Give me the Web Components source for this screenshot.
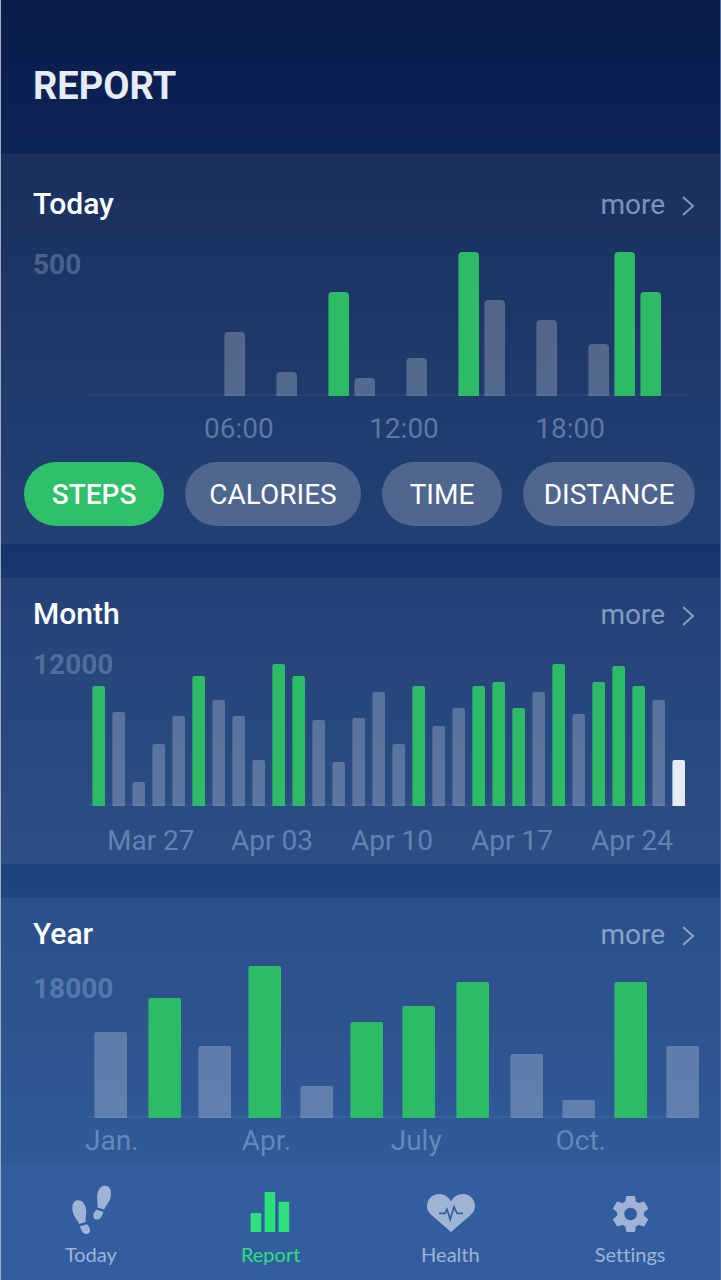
<!DOCTYPE html>
<html lang="en">
<head>
<meta charset="utf-8">
<meta name="viewport" content="width=device-width, initial-scale=1">
<title>Report</title>
<style>
    body{
        margin: 0;
        font-family: Roboto, "Liberation Sans", sans-serif;
        color: #fff;
    }
</style>
</head>
<body>
<report-app>
    <report-panel heading="Today" style="--pad-top: 32px; --pad-bottom: 18px; --head-gap: 26px">
        <bar-chart kind="day" peak="500"></bar-chart>
        <metric-tabs></metric-tabs>
    </report-panel>
    <report-panel heading="Month" style="--pad-bottom: 6px; --head-gap: 16px">
        <bar-chart kind="month" peak="12000"></bar-chart>
    </report-panel>
    <report-panel heading="Year" style="--pad-bottom: 8px; --head-gap: 14px">
        <bar-chart kind="year" peak="18000"></bar-chart>
    </report-panel>
    <tab-bar slot="footer">
        <tab-item label="Today" icon="steps"></tab-item>
        <tab-item label="Report" icon="report" active></tab-item>
        <tab-item label="Health" icon="heart"></tab-item>
        <tab-item label="Settings" icon="gear"></tab-item>
    </tab-bar>
</report-app>

<script>
class ReportApp extends HTMLElement{
    constructor(){
        super();
        this.shadow = this.attachShadow({mode: 'open'});
    }

    connectedCallback(){
        this.shadow.innerHTML =
        `
        <style>
            :host{
                display: flex;
                flex-direction: column;
                min-height: 100vh;
                box-sizing: border-box;
                border-left: 1px solid #a3adbd;
                border-right: 1px solid #52709f;
                background: linear-gradient(#0a1c4c, #0c2454 12%, #17366e 44%, #1e4580 69%, #26549a);
            }
            header{
                padding: 62px 32px 44px;
            }
            h1{
                margin: 0;
                font-size: 38px;
                line-height: 48px;
                font-weight: 700;
                color: #e6ebf5;
            }
            main{
                display: flex;
                flex-direction: column;
                gap: 34px;
                flex: 1;
            }
        </style>
        <header><h1>REPORT</h1></header>
        <main><slot></slot></main>
        <slot name="footer"></slot>`;
    }
}
customElements.define('report-app', ReportApp);

class ReportPanel extends HTMLElement{
    constructor(){
        super();
        this.shadow = this.attachShadow({mode: 'open'});
    }

    connectedCallback(){
        this.shadow.innerHTML =
        `
        <style>
            :host{
                display: block;
                padding: var(--pad-top, 18px) 0 var(--pad-bottom);
                background: rgba(255, 255, 255, .06);
            }
            .head{
                display: flex;
                justify-content: space-between;
                align-items: baseline;
                padding: 0 25px 0 32px;
                margin-bottom: var(--head-gap);
            }
            h2{
                margin: 0;
                font-size: 30px;
                line-height: 36px;
                font-weight: 500;
            }
            a{
                display: flex;
                align-items: center;
                gap: 16px;
                font-size: 28px;
                line-height: 32px;
                color: rgba(215, 234, 255, .54);
                text-decoration: none;
            }
            svg{
                width: 14px;
                height: 20px;
                margin-top: 2px;
            }
        </style>
        <div class="head">
            <h2>${this.getAttribute('heading')}</h2>
            <a href="#">more
                <svg viewBox="0 0 14 20" aria-hidden="true">
                    <path d="M2 1L12 10L2 19" fill="none" stroke="currentColor" stroke-width="2"/>
                </svg>
            </a>
        </div>
        <slot></slot>`;
    }
}
customElements.define('report-panel', ReportPanel);

// bars are [x, height, tone]: g = goal reached, w = running day, none = below goal
const CHARTS = {
    day: {
        height: 148,
        barWidth: 20,
        radius: 4,
        axis: [87, 687],
        bars: [
            [224, 64], [276, 24], [328, 104, 'g'], [354, 18], [406, 38], [458, 144, 'g'],
            [484, 96], [536, 76], [588, 52], [614, 144, 'g'], [640, 104, 'g']
        ],
        labels: ['06:00', '12:00', '18:00'],
        columns: '166fr 167fr 68fr',
        inset: '16px 115px 16px 203px'
    },
    month: {
        height: 158,
        barWidth: 12,
        radius: 2,
        axis: [87, 687],
        bars: [
            [92, 120, 'g'], [112, 94], [132, 24], [152, 62], [172, 90], [192, 130, 'g'],
            [212, 106], [232, 90], [252, 46], [272, 142, 'g'], [292, 130, 'g'], [312, 86],
            [332, 44], [352, 88], [372, 114], [392, 62], [412, 120, 'g'], [432, 80],
            [452, 98], [472, 120, 'g'], [492, 124, 'g'], [512, 98, 'g'], [532, 114],
            [552, 142, 'g'], [572, 92], [592, 124, 'g'], [612, 140, 'g'], [632, 120, 'g'],
            [652, 106], [672, 46, 'w']
        ],
        labels: ['Mar 27', 'Apr 03', 'Apr 10', 'Apr 17', 'Apr 24'],
        columns: '124fr 120fr 120fr 120fr 82fr',
        inset: '18px 47px 0 106px'
    },
    year: {
        height: 152,
        barWidth: 32,
        radius: 2,
        axis: [87, 687],
        bars: [
            [94, 86], [148, 120, 'g'], [198, 72], [248, 152, 'g'], [300, 32], [350, 96, 'g'],
            [402, 112, 'g'], [456, 136, 'g'], [510, 64], [562, 18], [614, 136, 'g'], [666, 72]
        ],
        labels: ['Jan.', 'Apr.', 'July', 'Oct.'],
        columns: '157fr 149fr 165fr 50fr',
        inset: '6px 114px 0 84px'
    }
};

class BarChart extends HTMLElement{
    constructor(){
        super();
        this.shadow = this.attachShadow({mode: 'open'});
    }

    connectedCallback(){
        const chart = CHARTS[this.getAttribute('kind')];
        const h = chart.height;
        const r = chart.radius;
        const w = chart.barWidth;

        const bars = chart.bars.map(([x, size, tone = '']) =>
            `<path class="${tone}" d="M${x - 0.6} ${h}v${r - size}q0 ${-r} ${r} ${-r}h${w + 0.6 - 2 * r}q${r} 0 ${r} ${r}v${size - r}z"/>`
        ).join('');

        this.shadow.innerHTML =
        `
        <style>
            :host{
                display: block;
                font-size: 28px;
                line-height: 34px;
            }
            .plot{
                display: grid;
            }
            .plot > *{
                grid-area: 1 / 1;
            }
            svg{
                display: block;
                width: 100%;
            }
            path{
                fill: rgba(255, 255, 255, .24);
            }
            path.g{
                fill: #2dbb68;
            }
            path.w{
                fill: #e6ebf4;
            }
            .axis{
                fill: rgba(255, 255, 255, .04);
            }
            .peak{
                padding-left: 32px;
                font-weight: 700;
                color: rgba(205, 228, 255, .27);
                align-self: start;
            }
            :host([kind="year"]) .peak{
                padding-top: 6px;
            }
            .labels{
                display: grid;
                grid-template-columns: ${chart.columns};
                padding: ${chart.inset};
                color: rgba(168, 198, 235, .45);
                white-space: nowrap;
            }
        </style>
        <div class="plot">
            <span class="peak">${this.getAttribute('peak')}</span>
            <svg viewBox="0 0 719 ${h}" role="img" aria-label="Steps chart">
                <rect class="axis" x="${chart.axis[0]}" y="${h - 2}" width="${chart.axis[1] - chart.axis[0]}" height="2"/>
                ${bars}
            </svg>
        </div>
        <div class="labels">${chart.labels.map(label => `<span>${label}</span>`).join('')}</div>`;
    }
}
customElements.define('bar-chart', BarChart);

class MetricTabs extends HTMLElement{
    constructor(){
        super();
        this.shadow = this.attachShadow({mode: 'open'});
    }

    connectedCallback(){
        this.shadow.innerHTML =
        `
        <style>
            :host{
                display: grid;
                grid-template-columns: 140fr 176fr 120fr 172fr;
                gap: 21px;
                padding: 0 25px 0 23px;
            }
            button{
                height: 64px;
                padding: 2px 0 0;
                border: 0;
                border-radius: 32px;
                background: #4f668f;
                font: inherit;
                font-size: 28px;
                line-height: 32px;
                color: #fff;
                cursor: pointer;
            }
            button.active{
                background: #2ec06a;
                font-weight: 500;
            }
        </style>
        <button class="active" type="button">STEPS</button>
        <button type="button">CALORIES</button>
        <button type="button">TIME</button>
        <button type="button">DISTANCE</button>`;

        const buttons = this.shadow.querySelectorAll('button');
        buttons.forEach(button => {
            button.addEventListener('click', () => {
                buttons.forEach(b => b.classList.toggle('active', b === button));
            });
        });
    }
}
customElements.define('metric-tabs', MetricTabs);

class TabBar extends HTMLElement{
    constructor(){
        super();
        this.shadow = this.attachShadow({mode: 'open'});
    }

    connectedCallback(){
        this.shadow.innerHTML =
        `
        <style>
            :host{
                display: block;
                background: #325ea0;
            }
            nav{
                display: grid;
                grid-template-columns: repeat(4, 1fr);
                padding: 20px 0 14px;
            }
        </style>
        <nav><slot></slot></nav>`;
    }
}
customElements.define('tab-bar', TabBar);

const SHOE = `
    <path d="M10 14.3C5 15.5 4.6 22 6.2 27.5C7.4 31.5 10.7 34 12.2 38L18.7 36C18.2 31 20 28 18.8 22C17.8 17 14.5 13.4 10 14.3z"/>
    <path d="M13 40.3L20 38.3C22 40.5 23.6 43 23 45.5C22.3 48.3 18.5 48.8 16.3 47C14.3 45.3 13.8 43 13 40.3z"/>`;

const ICONS = {
    steps: `${SHOE}<g transform="translate(49.3 -14.5) scale(-1 1)">${SHOE}</g>`,
    report: `<path d="M3.6 27h10.6v19H3.6zM17.6 6h10.6v40H17.6zM31.6 15.7h10.6V46H31.6z"/>`,
    heart: `
        <path d="M25 46L6 29.5C2.500 26.500 1 23.500 1 20C1 13 6.500 8 13 8c5 0 9.500 2.700 12 7.500C27.500 10.700 32 8 37 8c6.500 0 12 5 12 12c0 3.500-1.500 6.500-5 9.500z"/>
        <path d="M13 27.300h6l2-4l3.200 10l3.800-12.500l3 6.500h6" fill="none" stroke="#325ea0" stroke-width="1.700"/>`,
    gear: `
        <g transform="translate(3 6.400) scale(1.800)">
            <path d="M19.430 12.980c.04-.32.07-.64.07-.98s-.03-.66-.07-.98l2.110-1.650c.19-.15.24-.42.12-.64l-2-3.460c-.12-.22-.39-.3-.61-.22l-2.490 1c-.52-.4-1.080-.73-1.690-.98l-.38-2.650C14.460 2.180 14.250 2 14 2h-4c-.25 0-.46.18-.49.42l-.38 2.650c-.61.25-1.170.59-1.690.98l-2.490-1c-.23-.09-.49 0-.61.22l-2 3.460c-.13.22-.07.49.12.64l2.110 1.650c-.04.32-.07.65-.07.98s.03.66.07.98l-2.110 1.650c-.19.15-.24.42-.12.64l2 3.460c.12.22.39.3.61.22l2.490-1c.52.4 1.080.73 1.690.98l.38 2.650c.03.24.24.42.49.42h4c.25 0 .46-.18.49-.42l.38-2.650c.61-.25 1.170-.59 1.690-.98l2.490 1c.23.09.49 0 .61-.22l2-3.460c.12-.22.07-.49-.12-.64l-2.110-1.650zM12 15.500c-1.930 0-3.500-1.570-3.500-3.500s1.570-3.500 3.500-3.500 3.500 1.570 3.500 3.500-1.570 3.500-3.500 3.500z"/>
        </g>`
};

class TabItem extends HTMLElement{
    constructor(){
        super();
        this.shadow = this.attachShadow({mode: 'open'});
    }

    connectedCallback(){
        this.shadow.innerHTML =
        `
        <style>
            :host{
                display: block;
                color: #9fb3d5;
            }
            :host([active]){
                color: #2ee07a;
            }
            a{
                display: flex;
                flex-direction: column;
                align-items: center;
                gap: 8px;
                font-family: Lato, "Liberation Sans", sans-serif;
                font-size: 20px;
                line-height: 24px;
                font-variant-ligatures: none;
                color: inherit;
                text-decoration: none;
            }
            svg{
                width: 48px;
                height: 48px;
                fill: currentColor;
                overflow: visible;
            }
        </style>
        <a href="#">
            <svg viewBox="0 0 48 48" aria-hidden="true">${ICONS[this.getAttribute('icon')]}</svg>
            <span>${this.getAttribute('label')}</span>
        </a>`;
    }
}
customElements.define('tab-item', TabItem);
</script>
</body>
</html>
